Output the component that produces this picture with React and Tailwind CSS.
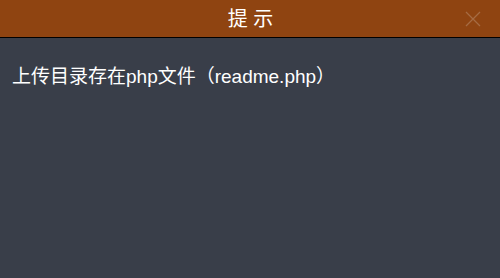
import React from 'react';

const App = () => {
  return (
    <div
      className="w-[500px] h-[278px] bg-[#393e49] flex flex-col text-white"
      style={{ fontFamily: '"Liberation Sans", "Noto Sans CJK SC", sans-serif' }}
    >
      {/* Header */}
      <div className="relative h-[38px] bg-[#8f4411] border-b border-black flex items-center justify-center">
        <span className="text-[20px] leading-none pl-[1px]">提 示</span>
        <svg
          className="absolute right-[19px] top-[11px] w-[16px] h-[16px] opacity-40"
          viewBox="0 0 16 16"
          fill="none"
          stroke="#c7a58f"
          strokeWidth="1.3"
        >
          <path d="M1 1 L15 15 M15 1 L1 15" />
        </svg>
      </div>

      {/* Body */}
      <div className="px-[12px] pt-[28px] text-[19px] leading-[22px]">
        上传目录存在php文件（readme.php）
      </div>
    </div>
  );
};

export default App;
